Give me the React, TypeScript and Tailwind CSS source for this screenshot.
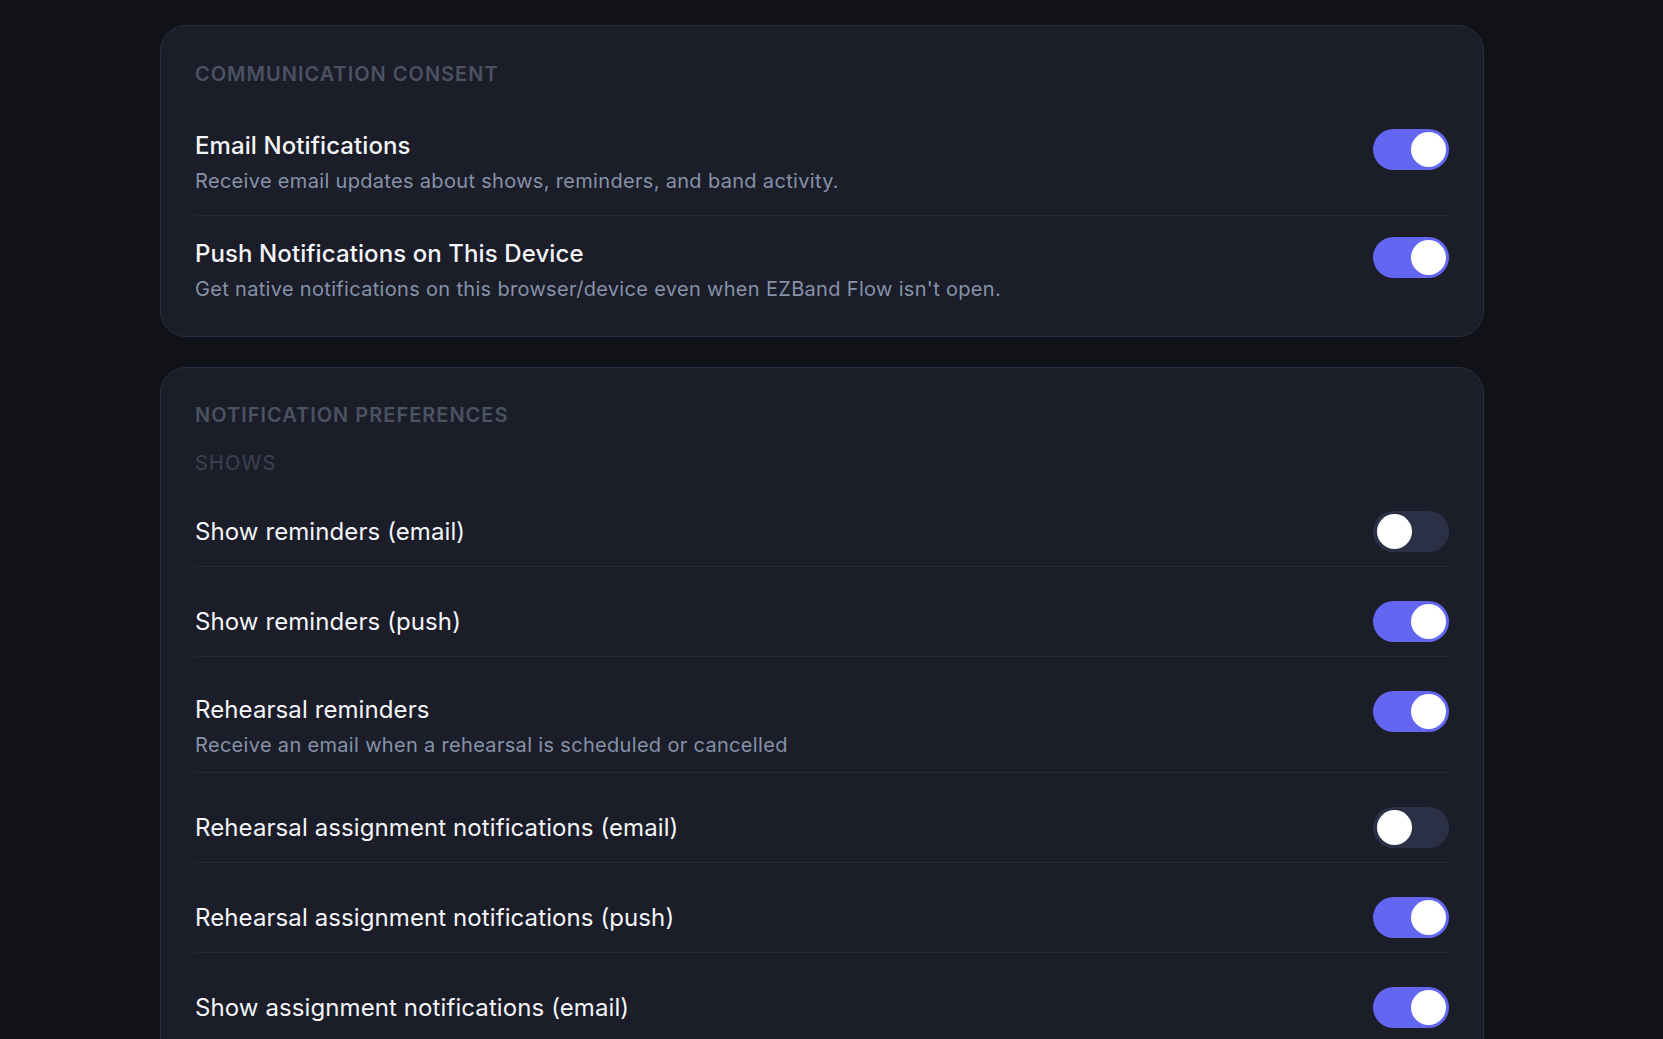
import React, { useState } from 'react';

type Pref = {
  id: string;
  title: string;
  description?: string;
  enabled: boolean;
};

const consentItems: Pref[] = [
  {
    id: 'email',
    title: 'Email Notifications',
    description: 'Receive email updates about shows, reminders, and band activity.',
    enabled: true,
  },
  {
    id: 'push',
    title: 'Push Notifications on This Device',
    description: "Get native notifications on this browser/device even when EZBand Flow isn't open.",
    enabled: true,
  },
];

const showPrefs: Pref[] = [
  { id: 'show-email', title: 'Show reminders (email)', enabled: false },
  { id: 'show-push', title: 'Show reminders (push)', enabled: true },
  {
    id: 'rehearsal',
    title: 'Rehearsal reminders',
    description: 'Receive an email when a rehearsal is scheduled or cancelled',
    enabled: true,
  },
  { id: 'rehearsal-assign-email', title: 'Rehearsal assignment notifications (email)', enabled: false },
  { id: 'rehearsal-assign-push', title: 'Rehearsal assignment notifications (push)', enabled: true },
  { id: 'show-assign-email', title: 'Show assignment notifications (email)', enabled: true },
  { id: 'show-assign-push', title: 'Show assignment notifications (push)', enabled: true },
];

const Toggle: React.FC<{ on: boolean; onChange: () => void }> = ({ on, onChange }) => (
  <button
    type="button"
    role="switch"
    aria-checked={on}
    onClick={onChange}
    className={`flex h-[41px] w-[76px] shrink-0 items-center rounded-full px-[3px] ${
      on ? 'justify-end bg-[#6366f1]' : 'justify-start bg-[#2c3047]'
    }`}
  >
    <span className={`block h-[35px] w-[35px] rounded-full bg-white ${on ? '' : 'ml-px'}`} />
  </button>
);

// consent rows use a bolder title; preference rows are regular weight
const PrefText: React.FC<{ pref: Pref; strong?: boolean }> = ({ pref, strong }) => (
  <div className="flex min-h-[41px] flex-col justify-center">
    <p
      className={`text-[24px] tracking-[0.004em] text-[#f4f5f8] ${
        strong ? 'font-medium leading-[34px]' : 'font-normal leading-[37px]'
      }`}
    >
      {pref.title}
    </p>
    {pref.description && (
      <p
        className={`text-[20px] tracking-[0.016em] text-[#8592a8] ${
          strong ? 'mt-[4px] leading-[28px]' : 'mt-[5px] leading-[24px]'
        }`}
      >
        {pref.description}
      </p>
    )}
  </div>
);

const usePrefs = (initial: Pref[]) => {
  const [items, setItems] = useState(initial);
  const toggle = (id: string) =>
    setItems((prev) => prev.map((p) => (p.id === id ? { ...p, enabled: !p.enabled } : p)));
  return [items, toggle] as const;
};

const CardHeading: React.FC<{ children: React.ReactNode; className?: string }> = ({ children, className }) => (
  <h2 className={`text-[20px] font-semibold uppercase leading-[28px] tracking-[0.05em] text-[#4a5263] ${className ?? ''}`}>
    {children}
  </h2>
);

const App: React.FC = () => {
  const [consent, toggleConsent] = usePrefs(consentItems);
  const [prefs, togglePref] = usePrefs(showPrefs);

  return (
    <div className="min-h-screen bg-[#111217] pb-10 pl-[160px] pt-[25px] font-['Inter','Noto_Sans',sans-serif] antialiased">
      <div className="flex w-[1324px] flex-col gap-[30px]">
        <section className="rounded-[26px] border border-[#292d42] bg-[#1b1d28] px-[34px] pb-[33px] pt-[34px]">
          <CardHeading className="mb-[20px]">Communication Consent</CardHeading>
          <div>
            {consent.map((item, i) => (
              <div
                key={item.id}
                className={`flex items-start justify-between gap-6 pt-[21px] ${
                  i < consent.length - 1 ? 'border-b border-[#252839] pb-[20px]' : ''
                }`}
              >
                <PrefText pref={item} strong />
                <Toggle on={item.enabled} onChange={() => toggleConsent(item.id)} />
              </div>
            ))}
          </div>
        </section>

        <section className="rounded-[26px] border border-[#292d42] bg-[#1b1d28] px-[34px] pb-[33px] pt-[33px]">
          <div className="flex flex-col gap-[19.75px]">
            <CardHeading>Notification Preferences</CardHeading>
            <h3 className="text-[20px] font-normal uppercase leading-[28px] tracking-[0.06em] text-[#3b4150]">
              Shows
            </h3>
            {prefs.map((item) => (
              <div
                key={item.id}
                className="flex items-start justify-between gap-6 border-b border-[#252839] py-[14.25px]"
              >
                <PrefText pref={item} />
                <Toggle on={item.enabled} onChange={() => togglePref(item.id)} />
              </div>
            ))}
          </div>
        </section>
      </div>
    </div>
  );
};

export default App;
